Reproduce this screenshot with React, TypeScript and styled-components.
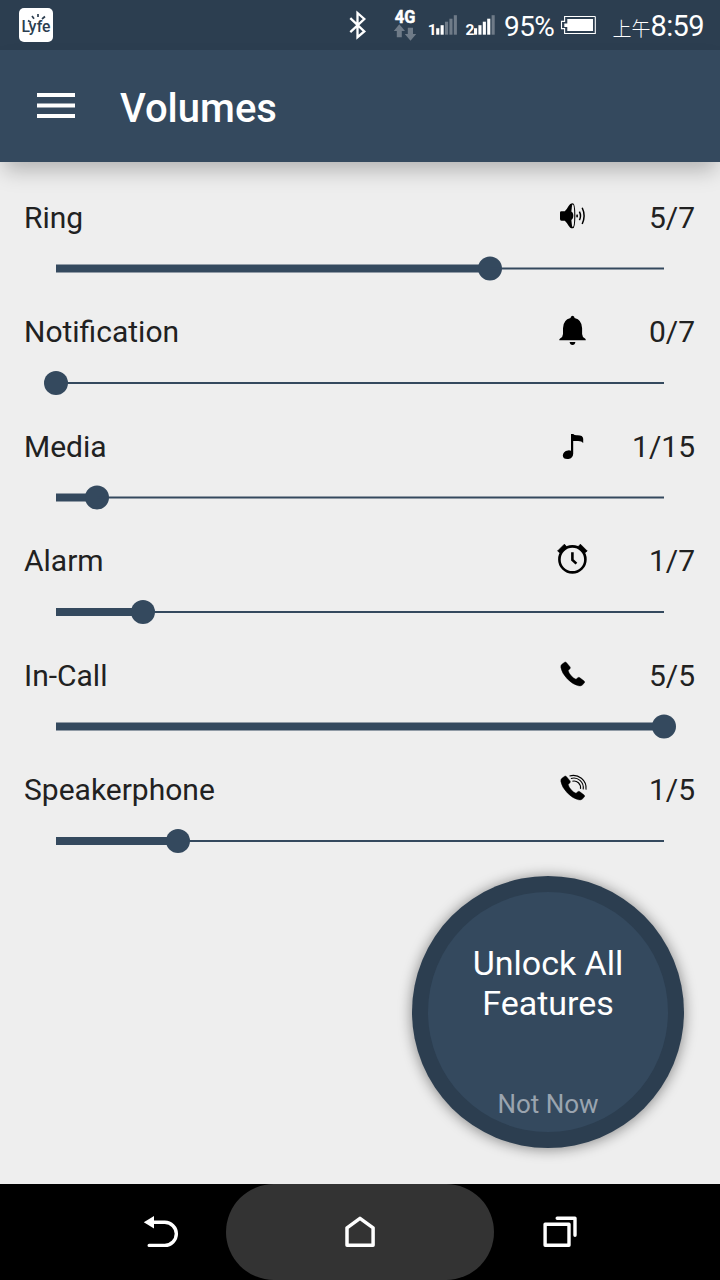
import React from "react";
import styled, { createGlobalStyle } from "styled-components";

const primary = "#34495e";
const primaryDark = "#2c3e50";
const dimmed = "#6f7b88";

const GlobalStyle = createGlobalStyle`
  * { box-sizing: border-box; }
  body {
    margin: 0;
    background: #eee;
    font-family: Roboto, "Noto Sans CJK TC", sans-serif;
  }
`;

const Screen = styled.div`
  position: relative;
  display: flex;
  flex-direction: column;
  width: 720px;
  height: 1280px;
  overflow: hidden;
  background: #eeeeee;
  color: #212121;
`;

const StatusBar = styled.header`
  display: flex;
  align-items: center;
  flex: none;
  height: 50px;
  padding: 0 16px 0 19px;
  background: ${primaryDark};
  color: #fff;
`;

const StatusIcons = styled.svg`
  display: block;
  flex: none;
  margin-left: auto;
`;

const AppBadge = styled.svg`
  display: block;
  flex: none;
`;

const BatteryLevel = styled.span`
  width: 60px;
  padding: 4px 0 0 4px;
  font-size: 28px;
  line-height: 50px;
  letter-spacing: -0.6px;
`;

const BatteryIcon = styled.svg`
  display: block;
  flex: none;
`;

const Clock = styled.div`
  display: flex;
  align-items: baseline;
  justify-content: flex-end;
  width: 105px;
  padding-top: 3px;
  white-space: nowrap;
`;

const DayPeriod = styled.span`
  font-family: "Noto Sans CJK TC", sans-serif;
  font-size: 19px;
  font-weight: 300;
  line-height: 50px;
`;

const Time = styled.span`
  font-size: 29px;
  line-height: 50px;
  letter-spacing: -0.6px;
`;

const AppBar = styled.div`
  display: flex;
  align-items: center;
  flex: none;
  height: 112px;
  padding-left: 37px;
  gap: 45px;
  background: ${primary};
  color: #fff;
  box-shadow: 0 12px 20px -4px rgba(0, 0, 0, 0.25);
`;

const MenuIcon = styled.svg`
  display: block;
  flex: none;
`;

const Title = styled.h1`
  margin: 5px 0 0;
  font-size: 40px;
  font-weight: 500;
  line-height: 48px;
`;

const VolumeList = styled.main`
  flex: 1;
  padding: 37.5px 24px 0;
`;

const VolumeRow = styled.section`
  height: 114.5px;
`;

const RowHead = styled.div`
  display: grid;
  grid-template-columns: 1fr 32px 107px;
  height: 36px;
  padding-right: 1px;
  font-size: 30px;
  line-height: 36px;
`;

const Value = styled.span`
  text-align: right;
`;

const Slider = styled.div<{ $half: boolean }>`
  display: flex;
  align-items: center;
  height: 24px;
  margin: 20.5px 32px 0;
  transform: translateY(${(p) => (p.$half ? "0.5px" : "0")});
`;

const Filled = styled.div`
  height: 8px;
  background: ${primary};
`;

const Thumb = styled.div`
  flex: none;
  width: 24px;
  height: 24px;
  margin: 0 -12px;
  border-radius: 50%;
  background: ${primary};
`;

const Remaining = styled.div`
  flex: 1;
  height: 2px;
  background: ${primary};
`;

const UnlockButton = styled.div`
  position: absolute;
  right: 36px;
  bottom: 132px;
  width: 272px;
  height: 272px;
  padding: 16px;
  border-radius: 50%;
  background: ${primaryDark};
  box-shadow: 0 1px 13px 1px rgba(0, 0, 0, 0.4);
`;

const UnlockFace = styled.div`
  display: flex;
  flex-direction: column;
  align-items: center;
  height: 240px;
  padding-top: 51px;
  border-radius: 50%;
  background: ${primary};
  color: #fff;
  text-align: center;
`;

const UnlockLabel = styled.div`
  width: 180px;
  font-size: 34px;
  line-height: 40px;
`;

const NotNow = styled.div`
  margin-top: 66px;
  font-size: 26px;
  line-height: 30px;
  color: #9aa4af;
`;

const NavBar = styled.nav`
  display: flex;
  justify-content: center;
  flex: none;
  height: 96px;
  background: #000;
`;

const NavButton = styled.div<{ $active?: boolean }>`
  display: flex;
  align-items: center;
  justify-content: center;
  width: ${(p) => (p.$active ? "268px" : "132px")};
  border-radius: 48px;
  background: ${(p) => (p.$active ? "#333333" : "transparent")};
`;

const Handset = () => (
  <path
    transform="translate(0.4 0)"
    stroke="#000"
    strokeWidth="0.4"
    d="M8.2 4.3Q9.2 3.6 10 4.6L13.7 8.9Q14.4 9.9 13.6 10.8L11.8 12.4Q12.4 15.2 14.8 17.8Q17 20.3 19.6 21.3L21.4 19.7Q22.3 19 23.2 19.6L27.8 23.1Q28.7 24 27.9 25L25.7 27.2Q24.4 28.3 22.2 27.8Q16.4 26.6 11 21Q5.2 15 4.4 9.3Q4.2 7.3 5.5 6.2Z"
  />
);

const icons = {
  ring: (
    <>
      <path d="M4 12.6Q4 11.2 5.4 11.2H8.8Q11 9 12.6 6Q14 3.2 16.2 3.2V28.4Q14 28.4 12.6 25.8Q11 22.8 8.8 20.8H5.4Q4 20.8 4 19Z" />
      <ellipse cx="16.8" cy="15.8" rx="2" ry="12" fill="#eee" stroke="#000" strokeWidth="1.1" />
      <path d="M14.8 11.6Q17.3 12.2 17.3 15.8T14.8 20Z" />
      <ellipse cx="21.1" cy="15.9" rx="0.9" ry="1.6" />
      <path d="M23.4 11.6Q25.6 15.9 23.4 20.2M26.2 7.8Q30 15.9 26.2 24" fill="none" stroke="#000" strokeWidth="1.5" />
    </>
  ),
  bell: (
    <path d="M16.5 1.7Q18.5 1.9 18.6 4.1Q26 5.9 26.1 14.3V19.9Q26.2 22.9 29 24.6Q29.9 25.3 29.8 26.2H3.3Q3.1 25.3 4.1 24.6Q6.9 22.9 7 19.9V14.3Q7.1 5.9 14.5 4.1Q14.6 1.9 16.5 1.7ZM13.6 27.9H19.4Q19 30.9 16.5 30.9T13.6 27.9Z" />
  ),
  note: (
    <path d="M15 4.9H17.2Q18.4 6.5 21.5 6.3Q27 6.3 27.2 9.7V14.1Q25.8 11.9 22.2 11.9H17.2V24.7Q17 29.1 12.4 30Q7 30.5 6.8 26.5Q7 22.1 12 21.4Q13.8 21.2 15 21.7Z" />
  ),
  alarm: (
    <>
      <g fill="none" stroke="#000">
        <circle cx="16.4" cy="16.4" r="13" strokeWidth="2.6" />
        <path d="M16.4 9.2V16.9L20.4 20.6" strokeWidth="2.6" />
      </g>
      <path d="M1.6 8L8.4 1.2L10.4 3.4L4 9.8ZM31.2 8L24.4 1.2L22.4 3.4L28.8 9.8Z" stroke="#000" strokeWidth="0.8" />
    </>
  ),
  call: <Handset />,
  speaker: (
    <>
      <Handset />
      <path
        d="M13.5 4C22.2 1.4 31 8.2 30 17.6M14.9 6.5C21.7 4.4 28.2 10 27.2 17.4M16.4 9.2C21 8.2 25.2 11.8 24.5 16.9"
        fill="none"
        stroke="#000"
        strokeWidth="1.1"
      />
    </>
  ),
};

type Stream = { name: string; icon: keyof typeof icons; value: number; max: number };

const streams: Stream[] = [
  { name: "Ring", icon: "ring", value: 5, max: 7 },
  { name: "Notification", icon: "bell", value: 0, max: 7 },
  { name: "Media", icon: "note", value: 1, max: 15 },
  { name: "Alarm", icon: "alarm", value: 1, max: 7 },
  { name: "In-Call", icon: "call", value: 5, max: 5 },
  { name: "Speakerphone", icon: "speaker", value: 1, max: 5 },
];

const Signal = ({ x, digit, level }: { x: number; digit: string; level: number }) => (
  <g>
    <text x={x - 8.4} y="34.6" fontSize="15.5" fontWeight="700" fontFamily="Roboto" fill="#fff">
      {digit}
    </text>
    {[6.5, 9.5, 13, 16, 19.5].map((h, i) => (
      <rect key={h} x={x + i * 4.4} y={34.7 - h} width="3.1" height={h} fill={i < level ? "#fff" : dimmed} />
    ))}
  </g>
);

export default function App() {
  return (
    <Screen>
      <GlobalStyle />
      <StatusBar>
        <AppBadge width="34" height="34" viewBox="19 8 34 34">
          <rect x="19" y="8" width="34" height="34" rx="5" fill="#fff" />
          <text x="21.4" y="31.7" fontFamily="Roboto" fontSize="17" fontWeight="500" textLength="29" lengthAdjust="spacingAndGlyphs" fill={primaryDark}>
            Lyfe
          </text>
          <path d="M38 14V17M32 16L34 18.8M45 16.5L42 19M28 20.5L31 22.5" stroke={primaryDark} strokeWidth="1.7" />
        </AppBadge>
        <StatusIcons width="153" height="50" viewBox="347 0 153 50">
          <path d="M350.3 18.2L364.3 31.5L357.5 37.2V13L364.3 19L350.3 32.2" fill="none" stroke="#fff" strokeWidth="2.3" />
          <text
            x="394.8"
            y="22.7"
            fontFamily="Roboto"
            fontSize="17.5"
            fontWeight="700"
            textLength="20.5"
            lengthAdjust="spacingAndGlyphs"
            fill="#fff"
            stroke="#fff"
            strokeWidth="0.5"
          >
            4G
          </text>
          <path d="M399.3 24.3L405 31H401.8V37.3H396.8V31H393.8ZM410.5 40.7L404.8 34H407.8V27.7H413V34H416.2Z" fill={dimmed} />
          <Signal x={436.2} digit="1" level={2} />
          <Signal x={474} digit="2" level={4} />
        </StatusIcons>
        <BatteryLevel>95%</BatteryLevel>
        <BatteryIcon width="39" height="50" viewBox="560 0 39 50">
          <path d="M595.3 16.5V33.5H564.6V28.6H561.5V21.4H564.6V16.5H595.3" fill="none" stroke="#fff" strokeWidth="1.1" />
          <path d="M567.3 19H593V31H567.3V27H564.3V23.4H567.3Z" fill="#fff" />
        </BatteryIcon>
        <Clock>
          <DayPeriod>上午</DayPeriod>
          <Time>8:59</Time>
        </Clock>
      </StatusBar>
      <AppBar>
        <MenuIcon width="38" height="26" viewBox="0 0 38 26">
          <path d="M0 2H38M0 12.5H38M0 23H38" stroke="#fff" strokeWidth="4" />
        </MenuIcon>
        <Title>Volumes</Title>
      </AppBar>
      <VolumeList>
        {streams.map((s, i) => (
          <VolumeRow key={s.name}>
            <RowHead>
              <span>{s.name}</span>
              <svg width="32" height="32" viewBox="0 0 32 32">{icons[s.icon]}</svg>
              <Value>{`${s.value}/${s.max}`}</Value>
            </RowHead>
            <Slider $half={i % 2 === 0}>
              <Filled style={{ width: `${(s.value / s.max) * 100}%` }} />
              <Thumb />
              <Remaining />
            </Slider>
          </VolumeRow>
        ))}
      </VolumeList>
      <NavBar>
        <NavButton>
          <svg width="40" height="40" viewBox="140 1212 40 40">
            <path d="M152 1222.3H164.8A11.5 11.5 0 0 1 164.8 1245.4H149.2" fill="none" stroke="#fff" strokeWidth="3.4" strokeLinecap="round" />
            <path d="M143.8 1222.3L154 1216V1228.4Z" fill="#fff" />
          </svg>
        </NavButton>
        <NavButton $active>
          <svg width="40" height="40" viewBox="340 1212 40 40">
            <path d="M347 1245.3V1227.8L360 1218.4L373.1 1227.8V1245.3Z" fill="none" stroke="#fff" strokeWidth="3.5" strokeLinejoin="round" />
          </svg>
        </NavButton>
        <NavButton>
          <svg width="40" height="40" viewBox="540 1212 40 40">
            <path d="M545.1 1224.3H569V1245.3H545.1ZM557.2 1218.2H575V1235.2" fill="none" stroke="#fff" strokeWidth="3.4" strokeLinejoin="round" strokeLinecap="round" />
          </svg>
        </NavButton>
      </NavBar>
      <UnlockButton>
        <UnlockFace>
          <UnlockLabel>Unlock All Features</UnlockLabel>
          <NotNow>Not Now</NotNow>
        </UnlockFace>
      </UnlockButton>
    </Screen>
  );
}
